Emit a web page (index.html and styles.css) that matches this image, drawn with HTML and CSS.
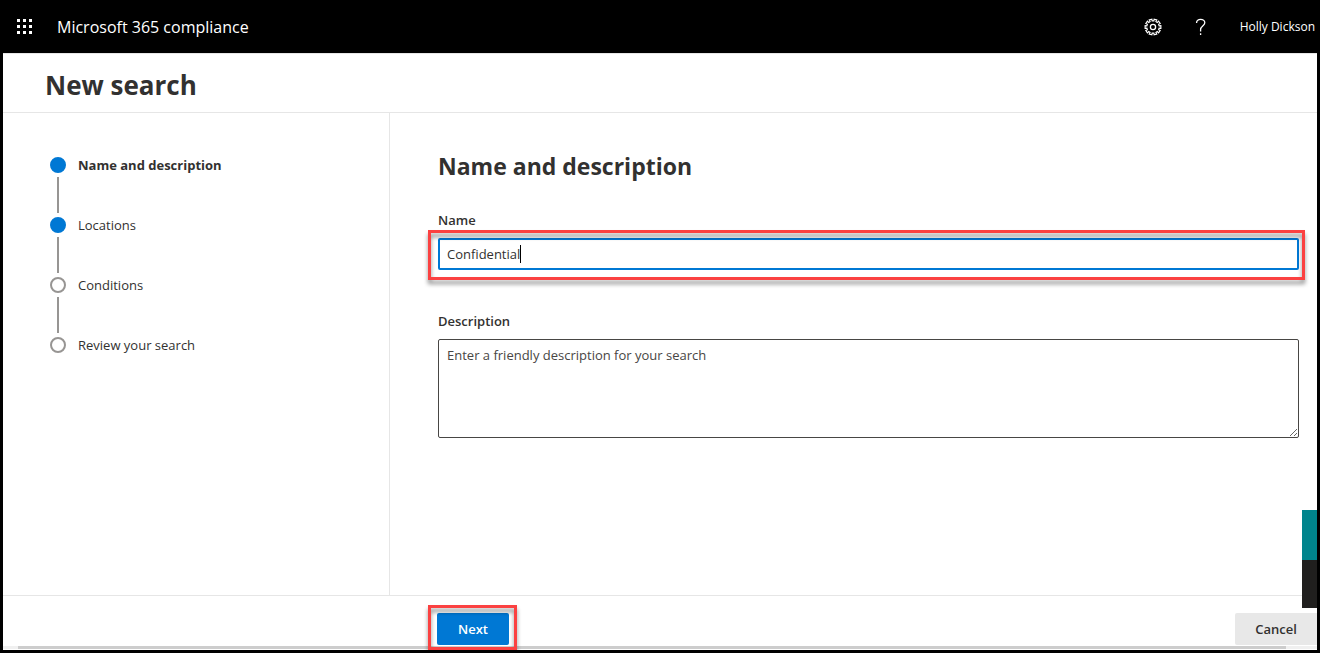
FILE: index.html
```html
<!DOCTYPE html>
<html lang="en">
<head>
<meta charset="utf-8">
<title>New search - Microsoft 365 compliance</title>
<link rel="stylesheet" href="styles.css">
</head>
<body>
<header class="topbar">
  <button class="icon-button launcher" type="button" aria-label="App launcher">
    <svg width="16" height="16" viewBox="0 0 16 16" fill="#fff" shape-rendering="crispEdges"><path d="M0 0h3v3H0zM6 0h3v3H6zM12 0h3v3h-3zM0 6h3v3H0zM6 6h3v3H6zM12 6h3v3h-3zM0 12h3v3H0zM6 12h3v3H6zM12 12h3v3h-3z"/></svg>
  </button>
  <span class="product">Microsoft 365 compliance</span>
  <button class="icon-button settings" type="button" aria-label="Settings">
    <svg width="18" height="18" viewBox="0 0 18 18" fill="none" stroke="#fff" stroke-width="1.100"><path d="M9.9 2.9 10.1 1.1 12.8 1.9 11.9 3.5 13.3 4.5 14.6 3.2 16.2 5.5 14.6 6.3 15.1 7.9 16.9 7.6V10.4L15.1 10.1 14.6 11.7 16.2 12.5 14.6 14.8 13.3 13.5 11.9 14.5 12.8 16.1 10.1 16.9 9.9 15.1H8.1L7.9 16.9 5.2 16.1 6.1 14.5 4.7 13.5 3.4 14.8 1.8 12.5 3.4 11.7 2.9 10.1 1.1 10.4V7.6L2.9 7.9 3.4 6.3 1.8 5.5 3.4 3.2 4.7 4.5 6.1 3.5 5.2 1.9 7.9 1.1 8.1 2.9z"/><circle cx="9" cy="9" r="2.600" stroke-width="1.300"/></svg>
  </button>
  <button class="icon-button help" type="button" aria-label="Help">
    <svg width="12" height="18" viewBox="0 0 12 18" fill="none" stroke="#fff" stroke-width="1.300"><path d="M1.600 5V4.500C1.600 2.500 3.300 1.400 5.600 1.400S9.800 2.700 9.800 4.700C9.800 7.800 5.600 8.300 5.600 11.500V13.500M5.600 15.300v1.700"/></svg>
  </button>
  <span class="user">Holly Dickson</span>
</header>

<div class="app">
  <div class="titlebar"><h1>New search</h1></div>
  <div class="body">
    <nav class="sidebar" aria-label="Steps">
      <ol class="steps">
        <li class="step done current"><span class="dot"></span><span>Name and description</span></li>
        <li class="step done"><span class="dot"></span><span>Locations</span></li>
        <li class="step"><span class="dot"></span><span>Conditions</span></li>
        <li class="step"><span class="dot"></span><span>Review your search</span></li>
      </ol>
    </nav>
    <main class="content">
      <h2>Name and description</h2>
      <label class="label" for="name">Name</label>
      <div class="field highlight">
        <input class="input" id="name" type="text" value="Confidential">
        <span class="caret"></span>
      </div>
      <label class="label label-description" for="description">Description</label>
      <textarea class="textarea" id="description" placeholder="Enter a friendly description for your search"></textarea>
    </main>
    <aside class="feedback"><span class="feedback-help"></span><span class="feedback-chat"></span></aside>
  </div>
  <footer class="footer">
    <div class="highlight next-wrap"><button class="button primary" type="button">Next</button></div>
    <button class="button cancel" type="button">Cancel</button>
  </footer>
  <div class="scrollbar"><div class="thumb"></div></div>
</div>
</body>
</html>
```
FILE: styles.css
```css
* { box-sizing: border-box; }

body {
  margin: 0;
  height: 100vh;
  display: flex;
  flex-direction: column;
  background: #000;
  color: #323130;
  font: 13px/20px "Open Sans", "Noto Sans", sans-serif;
}

button, input, textarea { font: inherit; color: inherit; }

.topbar {
  display: flex;
  align-items: center;
  padding: 0 5px 0 17px;
  height: 53px;
  color: #fff;
}
.icon-button { display: flex; padding: 0; border: 0; background: none; }
.product { margin-left: 24px; font-size: 16px; }
.settings { margin-left: auto; }
.help { margin: 0 33px; }
.user { font-size: 12px; }

.app {
  flex: 1;
  display: flex;
  flex-direction: column;
  margin: 0 3px 3px;
  background: #fff;
}
.titlebar {
  padding: 13px 42px 9px;
  border-top: 1px solid #e6e6e6;
  border-bottom: 1px solid #e6e6e6;
}
h1, h2 { margin: 0; font-weight: 700; }
h1 { font-size: 26px; line-height: 36px; }
h2 { font-size: 23px; line-height: 32px; }

.body { position: relative; flex: 1; display: flex; }
.sidebar { width: 387px; padding: 42px 46px; border-right: 1px solid #e6e6e6; }
.steps { margin: 0; padding: 0; list-style: none; }
.step { position: relative; display: flex; align-items: center; gap: 11px; height: 20px; margin-bottom: 40px; }
.step:not(:last-child)::after {
  content: "";
  position: absolute;
  left: 8px;
  top: 22px;
  width: 2px;
  height: 36px;
  background: #979593;
}
.dot { width: 16px; height: 16px; margin: 0 1px; border: 2px solid #979593; border-radius: 50%; }
.done .dot { border-color: #0078d4; background: #0078d4; }
.current { font-weight: 700; }

.content { flex: 1; display: flex; flex-direction: column; padding: 37px 18px 0 48px; }
.label { margin-top: 28px; font-weight: 600; }
.label-description { margin-top: 41px; }
.highlight { position: relative; }
.highlight::after {
  content: "";
  position: absolute;
  inset: -8px -8px -5px -9px;
  border: 3px solid #fb4141;
  filter: drop-shadow(0 4px 2px rgba(0, 0, 0, 0.45));
  pointer-events: none;
}
.field { margin-top: 8px; }
.field::after { inset: -8px -6px -10px -10px; }
.input {
  display: block;
  width: 100%;
  height: 32px;
  padding: 0 7px;
  border: 2px solid #0078d4;
  border-radius: 2px;
  outline: 0;
}
.caret { position: absolute; left: 82px; top: 7px; width: 1px; height: 18px; background: #000; }
.textarea {
  height: 99px;
  margin-top: 8px;
  padding: 5px 8px;
  border: 1px solid #484644;
  border-radius: 2px;
}
.textarea::placeholder { color: #484644; }

.feedback { position: absolute; right: 0; bottom: -13px; display: grid; grid-template-rows: 50px 48px; width: 15px; }
.feedback-help { background: #00848c; }
.feedback-chat { background: #201f1e; }

.footer {
  display: flex;
  justify-content: space-between;
  padding: 17px 0 1px 434px;
  border-top: 1px solid #e6e6e6;
}
.button { height: 32px; padding: 0; border: 0; border-radius: 2px; font-weight: 600; }
.primary { display: block; width: 72px; background: #0078d4; color: #fff; }
.cancel { width: 82px; border-radius: 2px 0 0 2px; background: #e8e8e8; }

.scrollbar { margin-bottom: 1px; padding: 0 31px 0 15px; background: #f0f0f0; }
.thumb { height: 3px; background: #cdcdcd; }
```
